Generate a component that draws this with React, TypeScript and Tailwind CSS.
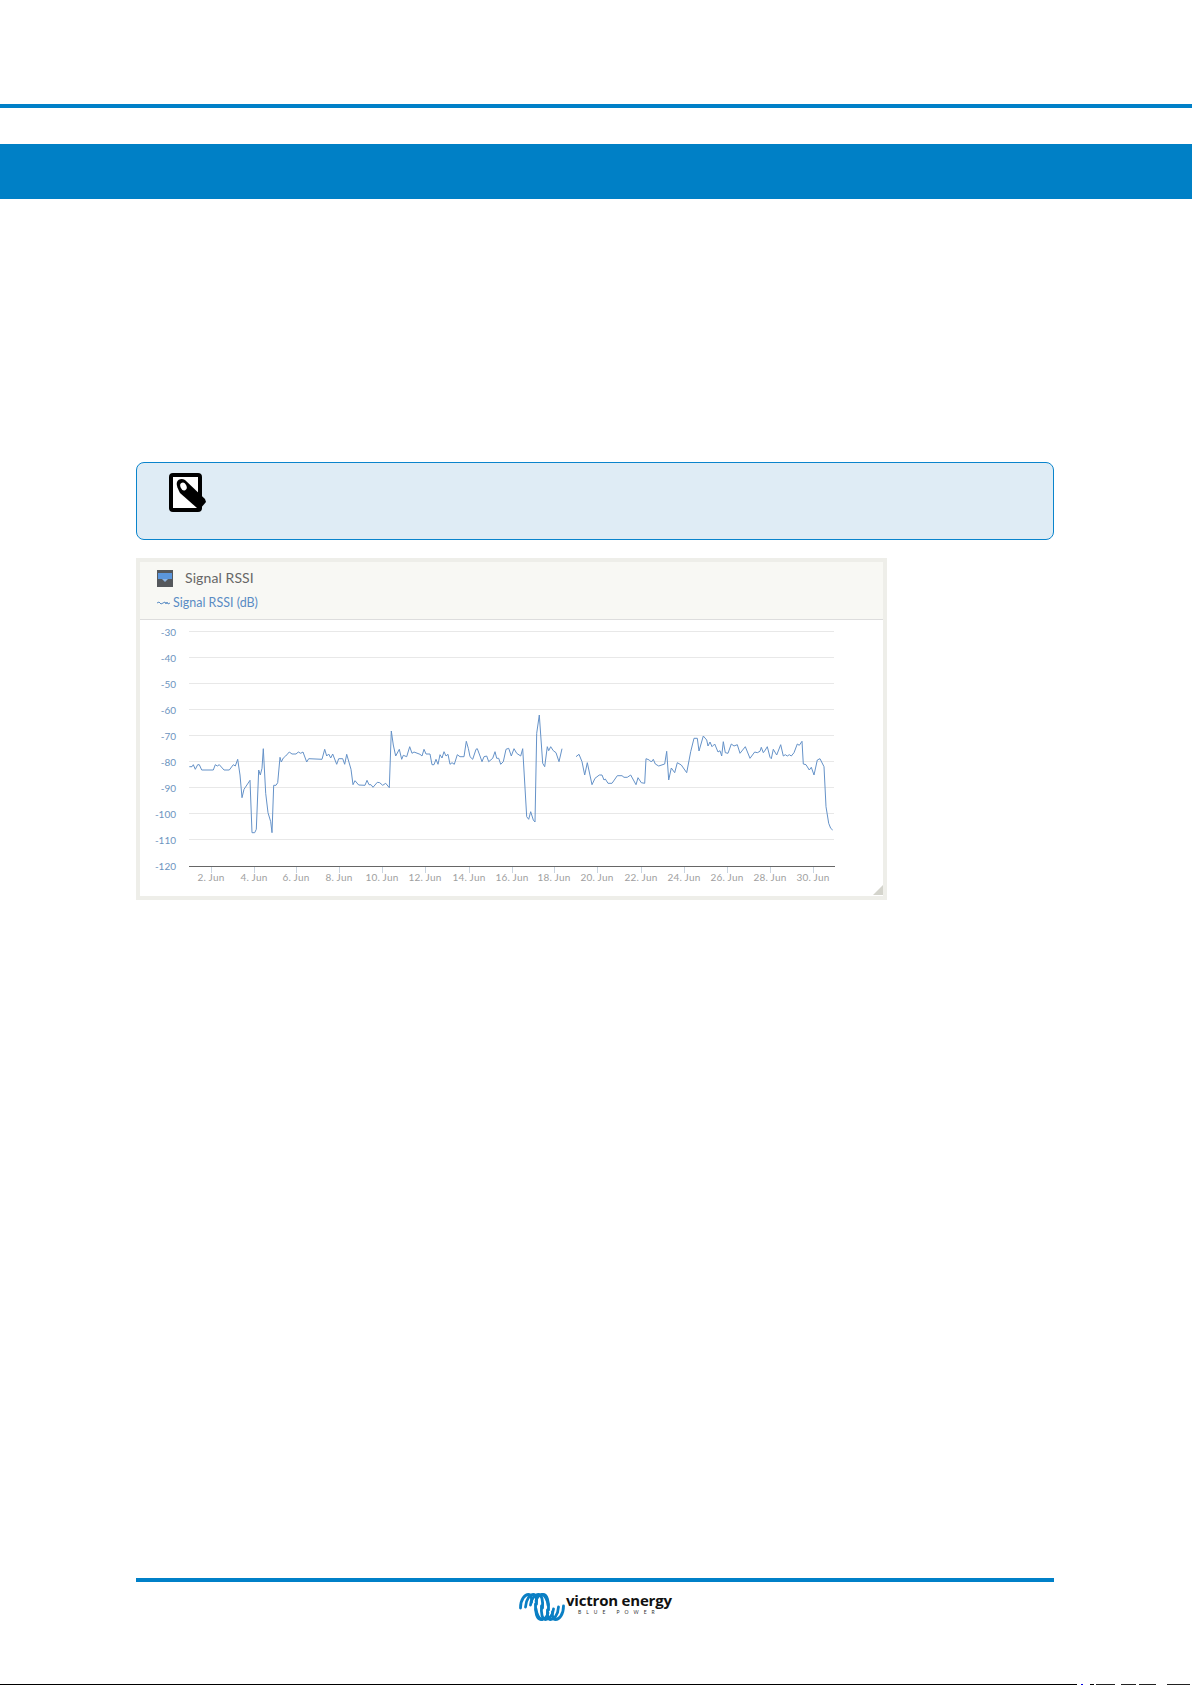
const leftTrace = '178,440 186,440 190,434 196,448 203,434 208,434 215,450 250,450 256,434 262,438 268,434 282,450 298,450 310,434 316,438 323,418 330,465 336,533 342,508 360,481 366,638 374,638 379,628 386,450 391,465 396,445 400,386 407,520 414,578 422,605 426,638 431,496 438,496 443,488 450,412 454,426 460,414 467,408 478,396 486,402 498,402 505,396 512,400 519,396 530,426 536,416 576,418 584,388 590,408 596,402 602,414 608,402 620,433 626,416 638,416 644,433 650,403 663,448 669,494 675,482 686,495 705,496 711,481 717,494 723,494 729,502 742,487 749,488 758,496 767,490 778,503 784,333 790,375 797,408 808,388 815,418 820,406 830,410 839,380 846,400 852,396 870,403 876,408 882,388 888,402 900,402 906,434 912,434 918,418 924,433 930,404 936,414 942,395 948,408 954,403 960,433 966,428 973,433 982,404 990,410 1002,410 1009,364 1015,385 1020,410 1028,418 1038,388 1042,386 1050,408';
const midTrace = '0,408 6,425 12,410 20,408 26,425 38,415 45,395 50,415 56,415 62,433 70,425 78,388 86,385 94,408 102,386 110,400 122,408 128,386 140,590 146,598 152,575 160,600 165,606 170,340 178,285 188,430 194,440 202,380 206,392 212,380 220,392 228,398 237,425 246,386';
const rightTrace = '288,410 297,403 306,425 314,465 322,428 336,494 345,475 358,465 366,465 372,480 376,477 384,490 396,490 412,467 426,467 432,472 442,472 452,465 468,494 474,473 484,488 494,490 498,416 508,420 514,426 520,418 526,432 536,438 554,432 560,394 566,480 574,444 584,458 592,428 604,435 620,458 632,395 642,355 652,355 657,393 670,348 680,360 684,378 690,366 696,380 704,372 714,396 720,392 725,408 730,365 736,398 744,400 754,372 762,378 772,374 780,400 796,380 810,415 824,396 832,398 840,394 844,382 850,398 856,390 862,380 870,412 874,416 880,388 890,405 902,374 910,408 916,404 922,408 928,404 934,408 942,398 952,372 958,376 966,364 970,432 978,434 988,450 994,442 1002,465 1012,420 1020,416 1032,440 1038,560 1046,610 1052,625 1058,630';

// crops were read at 3x, chart svg starts at page x=140 y=620
const toChart = (trace: string, originX: number) =>
  trace
    .split(' ')
    .map((pair) => {
      const [x, y] = pair.split(',').map(Number);
      return `${(x / 3 + originX - 140).toFixed(1)},${(y / 3).toFixed(1)}`;
    })
    .join(' ');

const yLabels = ['-30', '-40', '-50', '-60', '-70', '-80', '-90', '-100', '-110', '-120'];
const xLabels = [
  ['2. Jun', 71],
  ['4. Jun', 114],
  ['6. Jun', 156],
  ['8. Jun', 199],
  ['10. Jun', 242],
  ['12. Jun', 285],
  ['14. Jun', 329],
  ['16. Jun', 372],
  ['18. Jun', 414],
  ['20. Jun', 457],
  ['22. Jun', 501],
  ['24. Jun', 544],
  ['26. Jun', 587],
  ['28. Jun', 630],
  ['30. Jun', 673],
] as const;

const NoteIcon = () => (
  <svg width="38" height="40" viewBox="0 0 38 40" className="ml-[32px] mt-[10px]">
    <rect x="2" y="2" width="29" height="35" rx="2" fill="#fff" stroke="#000" strokeWidth="4" />
    <path d="M8 9 C9 6 13 5 16 7 L36 26 L37 29 L31 36 L28 35 L11 20 C9 16 7 12 8 9 Z" fill="#000" />
    <ellipse cx="14.500" cy="13.500" rx="3" ry="4" transform="rotate(-25 14.500 13.500)" fill="#fff" />
  </svg>
);

const coilHalf = (
  <>
    <path d="M1.500 15 C1.500 6 6 1.500 9.500 1.500 C12 1.500 13 5 12.500 9" />
    <path d="M6.500 14 C7 6 11 1.500 14.500 1.500 C17 1.500 18 6 17.500 11" />
    <path d="M11.500 12 C12 6 16 1.500 19.500 1.500 C23 1.500 24 8 23.500 15" />
    <path d="M17 8 C18 4 21 1.500 24 1.500 C28 1.500 30 8 29.500 17" />
    <path d="M17 16 C17.500 21 20 26 23 26.500" />
  </>
);

const Coil = () => (
  <svg width="46" height="28" viewBox="0 0 46 28" fill="none" stroke="#0a7fc4" strokeWidth="2.800" strokeLinecap="round">
    {coilHalf}
    <g transform="rotate(180 23 14)">{coilHalf}</g>
  </svg>
);

const App = () => {
  return (
    <div className="flex h-[1685px] w-[1192px] flex-col overflow-hidden bg-white font-['Lato',sans-serif]">
      <div className="mt-[104px] h-1 bg-[#0080c8]" />
      <div className="mt-9 h-[55px] bg-[#0080c6]" />

      <div className="ml-[136px] mt-[263px] h-[78px] w-[918px] rounded-lg border border-[#0a84cc] bg-[#dfecf5]">
        <NoteIcon />
      </div>

      <div className="ml-[136px] mt-[18px] h-[342px] w-[751px] border-4 border-[#eeeee9] bg-white">
        <div className="h-[58px] border-b border-[#dddddd] bg-[#f8f8f4] pl-[17px] pt-[7px]">
          <div className="flex items-center gap-[12px]">
            <svg width="16" height="17" viewBox="0 0 16 17">
              <rect width="16" height="17" fill="#55585c" />
              <rect x="1" y="3" width="14" height="6" fill="#5b96dc" />
              <path d="M5 9 H11 L8 12 Z" fill="#8fb4e0" />
            </svg>
            <span className="text-[14px] leading-[18px] tracking-[0.1px] text-[#666666]">Signal RSSI</span>
          </div>
          <div className="mt-[8px] flex items-center gap-[3px] text-[12.500px] leading-4 text-[#5a8cc4]">
            <svg width="13" height="6" viewBox="0 0 13 6" fill="none" stroke="#5a8cc4" strokeWidth="1">
              <path d="M0 3 L2 2 L4 4 L6 3 L8 2 L9 4 L10 2 L11 4 L13 3" />
            </svg>
            <span>Signal RSSI (dB)</span>
          </div>
        </div>

        <svg width="743" height="275" viewBox="0 0 743 275" className="block">
          {yLabels.map((label, i) => (
            <g key={label}>
              {i < 9 && <line x1="49" x2="694" y1={11.5 + i * 26} y2={11.5 + i * 26} stroke="#e8e8e8" />}
              <text x="36" y={16 + i * 26} textAnchor="end" fontSize="10" fill="#6d94c0">
                {label}
              </text>
            </g>
          ))}
          <line x1="49" x2="695" y1="246.500" y2="246.500" stroke="#666666" />
          {xLabels.map(([label, x]) => (
            <g key={label}>
              <line x1={x + 0.5} x2={x + 0.5} y1="247" y2="253" stroke="#c8d4e0" />
              <text x={x} y="261" textAnchor="middle" fontSize="10" letterSpacing="0.2" fill="#a0a0a0">
                {label}
              </text>
            </g>
          ))}
          <polyline points={toChart(leftTrace, 130)} fill="none" stroke="#6592c8" strokeWidth="1" />
          <polyline points={toChart(midTrace, 480)} fill="none" stroke="#6592c8" strokeWidth="1" />
          <polyline points={toChart(rightTrace, 480)} fill="none" stroke="#6592c8" strokeWidth="1" />
          <path d="M743 265 V275 H733 Z" fill="#d4d4cc" />
        </svg>
      </div>

      <div className="ml-[136px] mt-[678px] h-1 w-[918px] bg-[#0080c8]" />
      <div className="ml-[519px] mt-[11px] flex">
        <Coil />
        <div className="ml-px -mt-[3px] flex flex-col items-center">
          <span className="font-['Open_Sans',sans-serif] text-[15px] font-bold leading-[20px] tracking-[-0.2px] text-[#111111]">
            victron energy
          </span>
          <span className="-mt-[1px] text-[5px] leading-[6px] tracking-[5px] text-[#333333]">BLUE POWER</span>
        </div>
      </div>

      <div className="mt-auto flex h-px">
        <div className="w-[1077px] bg-black" />
        <div className="ml-[4px] w-[2px] bg-[#0000e0]" />
        <div className="ml-[7px] w-[4px] bg-black" />
        <div className="ml-[2px] w-[19px] bg-[#222222]" />
        <div className="ml-[6px] w-[15px] bg-[#222222]" />
        <div className="ml-[3px] w-[17px] bg-[#222222]" />
        <div className="ml-[11px] w-[23px] bg-[#222222]" />
      </div>
    </div>
  );
};

export default App;
